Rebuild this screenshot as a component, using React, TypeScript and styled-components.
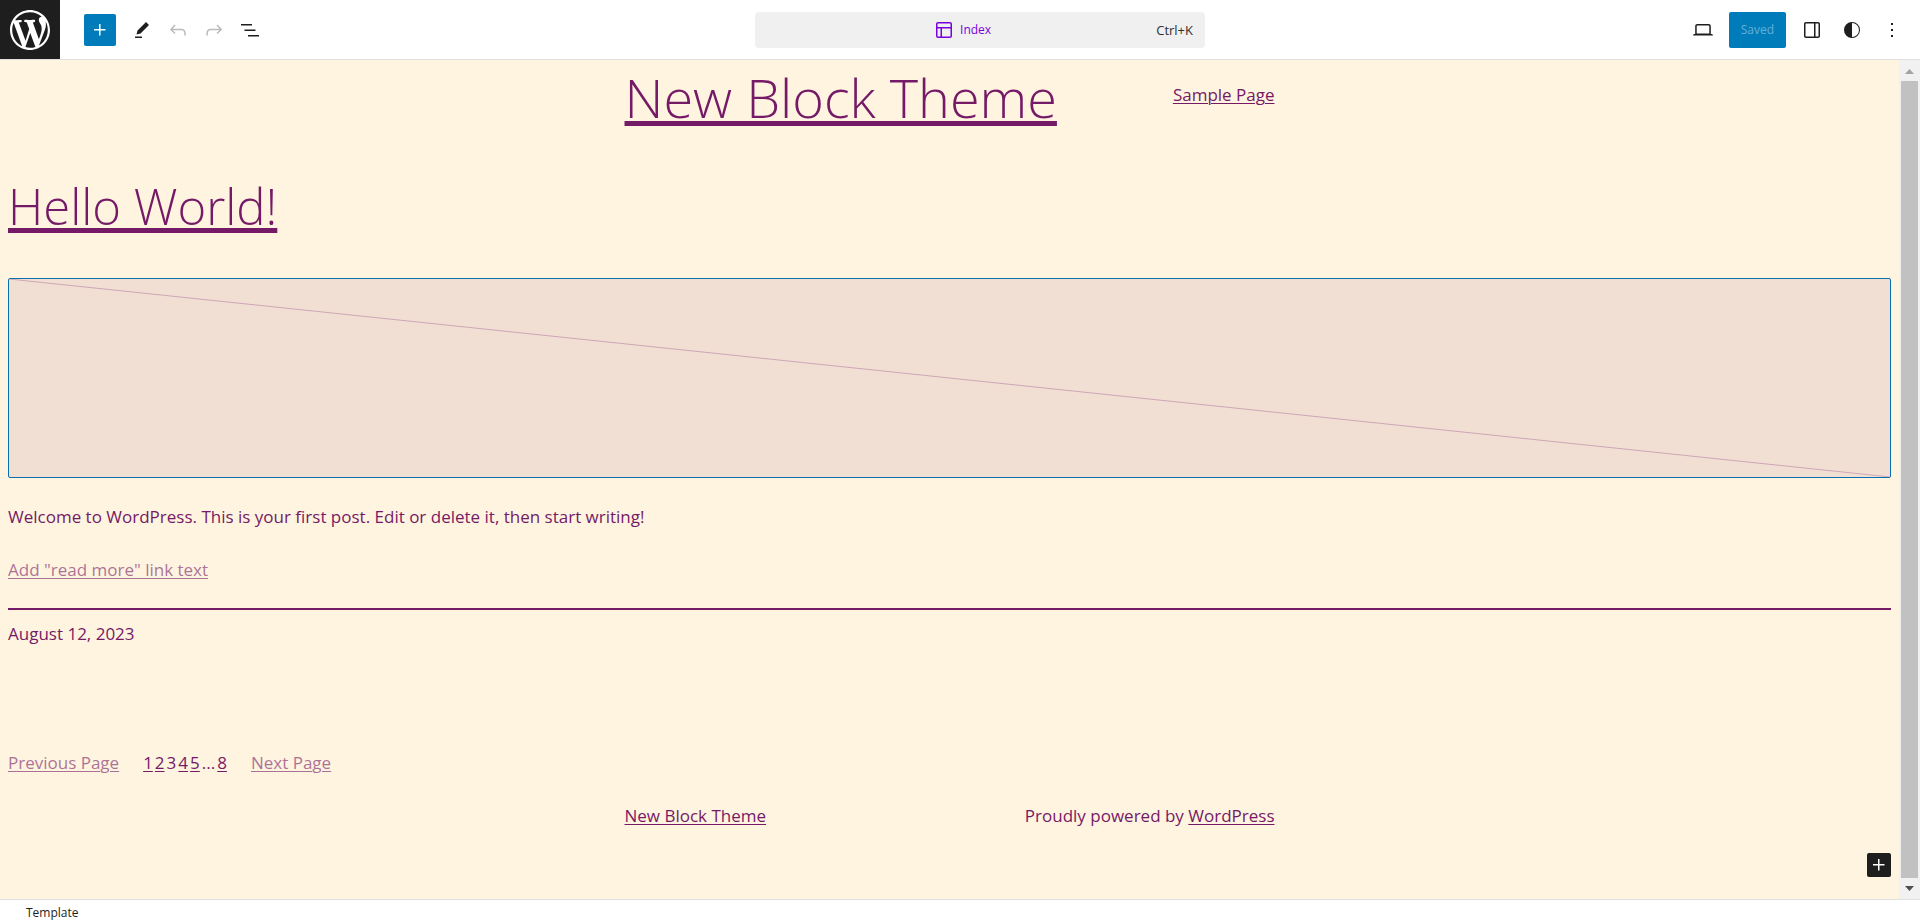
import React from "react";
import styled, { createGlobalStyle, css } from "styled-components";

const plum = "#751a66";
const sand = "#fff4e0";
const ink = "#1e1e1e";

const GlobalStyle = createGlobalStyle`
  *, *::before, *::after { box-sizing: border-box; }
  body { margin: 0; }
  button, a { font: inherit; color: inherit; }
`;

const Editor = styled.div`
  display: flex;
  flex-direction: column;
  min-height: 100vh;
  background: #fff;
  color: ${ink};
  font: 400 12px/16px "Open Sans", "Noto Sans", sans-serif;
`;

const Toolbar = styled.header`
  display: grid;
  grid-template-columns: 1fr minmax(0, 490px) 1fr;
  align-items: center;
  height: 60px;
  box-shadow: inset 0 -1px #e0e0e0;
`;

const ToolGroup = styled.div<{ $end?: boolean }>`
  display: flex;
  align-items: center;
  ${(p) => p.$end && css`
    justify-content: flex-end;
    gap: 8px;
    padding-right: 10px;
  `}
`;

const PanelButtons = styled.div`
  display: flex;
  gap: 4px;
`;

const SiteLink = styled.a`
  display: flex;
  align-items: center;
  justify-content: center;
  width: 60px;
  height: 59px;
  margin: 0 24px 1px 0;
  background: ${ink};
  color: #fff;
`;

const IconButton = styled.button<{ $faded?: boolean }>`
  display: flex;
  align-items: center;
  justify-content: center;
  width: 36px;
  height: 36px;
  padding: 0;
  border: 0;
  background: none;
  color: ${(p) => (p.$faded ? "#bbb" : ink)};
`;

const AddButton = styled(IconButton)`
  width: 32px;
  height: 32px;
  margin-right: 8px;
  border-radius: 2px;
  background: #007cba;
  color: #fff;
`;

const SaveButton = styled.button`
  height: 36px;
  padding: 0 12px;
  border: 0;
  border-radius: 2px;
  background: #007cba;
  color: #66b0d6;
`;

const CommandSlot = styled.div`
  padding-left: 40px;
`;

const CommandButton = styled.button`
  display: flex;
  align-items: center;
  width: 100%;
  height: 36px;
  padding: 0 12px;
  border: 0;
  border-radius: 4px;
  background: #f0f0f0;
`;

const DocumentName = styled.span`
  flex: 1;
  display: flex;
  align-items: center;
  justify-content: center;
  gap: 4px;
  color: #7b00e0;
`;

const Shortcut = styled.span`
  font-size: 13px;
  color: #2f2f2f;
`;

const Workspace = styled.div`
  flex: 1;
  display: flex;
  background: ${sand};
`;

const Canvas = styled.main`
  flex: 1;
  min-width: 0;
  display: flex;
  flex-direction: column;
  padding: 0 8px 22px;
  color: ${plum};
  font-size: 17px;
  line-height: 28px;
  font-weight: 400;
`;

const Constrained = styled.div`
  display: flex;
  align-items: center;
  justify-content: space-between;
  width: 100%;
  max-width: 650px;
  margin: 0 auto;
`;

const SiteNav = styled.nav`
  padding-bottom: 4px;
`;

const SiteTitle = styled.h1`
  margin: 0;
  font-size: 54px;
  line-height: 74px;
  font-weight: 300;
`;

const PostTitle = styled.h2`
  margin: 33px 0;
  font-size: 49px;
  line-height: 78px;
  font-weight: 300;
`;

const HeadingLink = styled.a`
  text-decoration: underline 5px;
  text-underline-offset: 3px;
`;

const TextLink = styled.a<{ $faded?: boolean }>`
  text-decoration: underline 1px;
  text-underline-offset: 2px;
  opacity: ${(p) => (p.$faded ? 0.6 : 1)};
`;

const FeaturedImage = styled.div`
  height: 200px;
  border: 1px solid #0a6fae;
  border-radius: 2px;
  background: #f1dfd3;
`;

const Diagonal = styled.svg`
  display: block;
  width: 100%;
  height: 100%;
  stroke: #cfa6b8;
`;

const Paragraph = styled.p`
  margin: 25px 0 0;
`;

const Separator = styled.hr`
  width: 100%;
  height: 2px;
  margin: 24px 0 10px;
  border: 0;
  background: ${plum};
`;

const Pagination = styled.nav`
  display: flex;
  gap: 24px;
  margin: 101px 0 25px;
`;

const PageNumbers = styled.div`
  display: flex;
  gap: 2px;
`;

const Appender = styled(IconButton)`
  align-self: flex-end;
  width: 24px;
  height: 24px;
  margin-top: auto;
  border-radius: 2px;
  background: ${ink};
  color: #fff;
`;

const Scrollbar = styled.div`
  display: flex;
  flex-direction: column;
  width: 21px;
  padding: 0 2px;
  background: #f1f1f1;
`;

const ScrollArrow = styled.svg`
  display: block;
  width: 17px;
  height: 21px;
`;

const ScrollThumb = styled.div`
  flex: 1;
  background: #c1c1c1;
`;

const Breadcrumb = styled.footer`
  height: 25px;
  padding: 5px 26px 3px;
  border-top: 1px solid #e0e0e0;
`;

const Icon = ({ d }: { d: string }) => (
  <svg width="24" height="24" viewBox="0 0 24 24" fill="currentColor" fillRule="evenodd" aria-hidden="true">
    <path d={d} />
  </svg>
);

const icons = {
  plus: "M11 12.5V17.5H12.5V12.5H17.5V11H12.5V6H11V11H6V12.5H11Z",
  edit: "m19 7-3-3-8.5 8.5-1 4 4-1L19 7Zm-7 11.5H5V20h7v-1.5Z",
  undo: "M18.3 11.7c-.6-.6-1.4-.9-2.3-.9H6.7l2.9-3.3-1.1-1-4.5 5L8.5 16l1-1-2.7-2.7H16c.5 0 .9.2 1.3.5 1 1 1 3.4 1 4.5v.3h1.5v-.2c0-1.5 0-4.3-1.5-5.7z",
  redo: "M15.6 6.5l-1.1 1 2.9 3.3H8c-.9 0-1.7.3-2.3.9-1.4 1.5-1.4 4.2-1.4 5.6v.2h1.5v-.3c0-1.1 0-3.5 1-4.5.3-.3.7-.5 1.3-.5h9.2L14.5 15l1.1 1.1 4.6-4.6-4.6-5z",
  list: "M3 6h11v1.5H3V6Zm3.5 5.5h11V13h-11v-1.5ZM21 17H10v1.5h11V17Z",
  layout: "M18 5.5H6a.5.5 0 00-.5.5v3h13V6a.5.5 0 00-.5-.5zm.5 5H10v8h8a.5.5 0 00.5-.5v-7.5zm-10 0h-3V18a.5.5 0 00.5.5h2.5v-8zM6 4h12a2 2 0 012 2v12a2 2 0 01-2 2H6a2 2 0 01-2-2V6a2 2 0 012-2z",
  desktop: "M20.5 16h-.7V8c0-1.1-.9-2-2-2H6.2c-1.1 0-2 .9-2 2v8h-.7c-.8 0-1.5.7-1.5 1.5h20c0-.8-.7-1.5-1.5-1.5zM5.7 8c0-.3.2-.5.5-.5h11.6c.3 0 .5.2.5.5v7.6H5.7V8z",
  drawer: "M18 4H6c-1.1 0-2 .9-2 2v12c0 1.1.9 2 2 2h12c1.1 0 2-.9 2-2V6c0-1.1-.9-2-2-2zm-4 14.5H6c-.3 0-.5-.2-.5-.5V6c0-.3.2-.5.5-.5h8v13zm4.5-.5c0 .3-.2.5-.5.5h-2.5v-13H18c.3 0 .5.2.5.5v12z",
  styles: "M20 12a8 8 0 1 1-16 0 8 8 0 0 1 16 0Zm-1 0a7 7 0 0 1-7 7V5a7 7 0 0 1 7 7Z",
  more: "M13 19h-2v-2h2v2zm0-6h-2v-2h2v2zm0-6h-2V5h2v2z",
};

const WordPressLogo = () => (
  <svg width="40" height="40" viewBox="0 0 20 20" fill="currentColor" aria-hidden="true">
    <path d="M20 10c0-5.51-4.49-10-10-10C4.48 0 0 4.49 0 10c0 5.52 4.48 10 10 10 5.51 0 10-4.48 10-10zM7.78 15.37L4.37 6.22c.55-.02 1.17-.08 1.17-.08.5-.06.44-1.13-.06-1.11 0 0-1.45.11-2.37.11-.18 0-.37 0-.58-.01C4.12 2.69 6.87 1.11 10 1.11c2.33 0 4.45.87 6.05 2.34-.68-.11-1.65.39-1.65 1.58 0 .74.45 1.36.9 2.1.35.61.55 1.36.55 2.46 0 1.49-1.4 5-1.4 5l-3.03-8.37c.54-.02.82-.17.82-.17.5-.05.44-1.25-.06-1.22 0 0-1.44.12-2.38.12-.87 0-2.33-.12-2.33-.12-.5-.03-.56 1.2-.06 1.22l.92.08 1.26 3.41zM17.41 10c.24-.64.74-1.87.43-4.25.7 1.29 1.05 2.71 1.05 4.25 0 3.29-1.73 6.24-4.4 7.78.97-2.59 1.94-5.2 2.92-7.78zM6.1 18.09C3.12 16.65 1.11 13.53 1.11 10c0-1.3.23-2.48.72-3.59C3.25 10.3 4.67 14.2 6.1 18.09zm4.03-6.63l2.58 6.98c-.86.29-1.76.45-2.71.45-.79 0-1.57-.11-2.29-.33.81-2.38 1.62-4.74 2.42-7.1z" />
  </svg>
);

export default function App() {
  return (
    <Editor>
      <GlobalStyle />
      <Toolbar>
        <ToolGroup>
          <SiteLink href="#" aria-label="Open navigation"><WordPressLogo /></SiteLink>
          <AddButton aria-label="Toggle block inserter"><Icon d={icons.plus} /></AddButton>
          <IconButton aria-label="Tools"><Icon d={icons.edit} /></IconButton>
          <IconButton $faded aria-label="Undo"><Icon d={icons.undo} /></IconButton>
          <IconButton $faded aria-label="Redo"><Icon d={icons.redo} /></IconButton>
          <IconButton aria-label="List view"><Icon d={icons.list} /></IconButton>
        </ToolGroup>
        <CommandSlot>
          <CommandButton>
            <DocumentName><Icon d={icons.layout} />Index</DocumentName>
            <Shortcut>Ctrl+K</Shortcut>
          </CommandButton>
        </CommandSlot>
        <ToolGroup $end>
          <IconButton aria-label="Preview"><Icon d={icons.desktop} /></IconButton>
          <SaveButton>Saved</SaveButton>
          <PanelButtons>
            <IconButton aria-label="Settings"><Icon d={icons.drawer} /></IconButton>
            <IconButton aria-label="Styles"><Icon d={icons.styles} /></IconButton>
            <IconButton aria-label="Options"><Icon d={icons.more} /></IconButton>
          </PanelButtons>
        </ToolGroup>
      </Toolbar>

      <Workspace>
        <Canvas>
          <Constrained>
            <SiteTitle><HeadingLink href="#">New Block Theme</HeadingLink></SiteTitle>
            <SiteNav><TextLink href="#">Sample Page</TextLink></SiteNav>
          </Constrained>
          <PostTitle><HeadingLink href="#">Hello World!</HeadingLink></PostTitle>
          <FeaturedImage>
            <Diagonal viewBox="0 0 100 100" preserveAspectRatio="none" aria-hidden="true">
              <line x1="0" y1="0" x2="100" y2="100" vectorEffect="non-scaling-stroke" />
            </Diagonal>
          </FeaturedImage>
          <Paragraph>
            Welcome to WordPress. This is your first post. Edit or delete it, then start writing!
          </Paragraph>
          <Paragraph><TextLink $faded href="#">Add "read more" link text</TextLink></Paragraph>
          <Separator />
          <time dateTime="2023-08-12">August 12, 2023</time>
          <Pagination aria-label="Pagination">
            <TextLink $faded href="#">Previous Page</TextLink>
            <PageNumbers>
              <TextLink href="#">1</TextLink>
              <TextLink href="#">2</TextLink>
              <span>3</span>
              <TextLink href="#">4</TextLink>
              <TextLink href="#">5</TextLink>
              <span>...</span>
              <TextLink href="#">8</TextLink>
            </PageNumbers>
            <TextLink $faded href="#">Next Page</TextLink>
          </Pagination>
          <Constrained>
            <TextLink href="#">New Block Theme</TextLink>
            <span>Proudly powered by <TextLink href="#">WordPress</TextLink></span>
          </Constrained>
          <Appender aria-label="Add block"><Icon d={icons.plus} /></Appender>
        </Canvas>
        <Scrollbar aria-hidden="true">
          <ScrollArrow viewBox="0 0 17 21"><path d="M4 14h9L8.500 9z" fill="#a3a3a3" /></ScrollArrow>
          <ScrollThumb />
          <ScrollArrow viewBox="0 0 17 21"><path d="M4 8h9l-4.500 5z" fill="#505050" /></ScrollArrow>
        </Scrollbar>
      </Workspace>

      <Breadcrumb>Template</Breadcrumb>
    </Editor>
  );
}
